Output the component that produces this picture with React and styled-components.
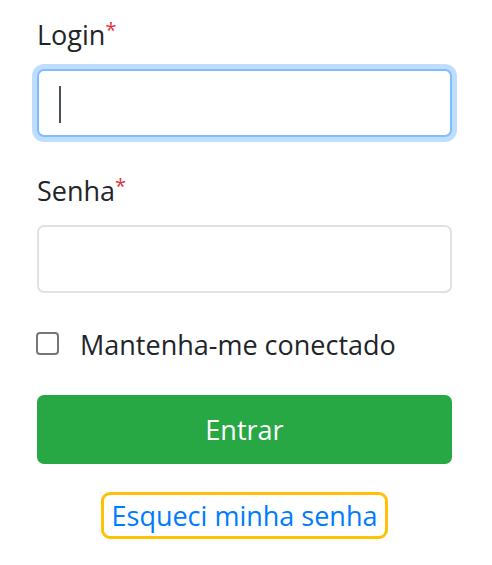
import React from "react";
import styled, { createGlobalStyle } from "styled-components";

const GlobalStyle = createGlobalStyle`
  html, body {
    margin: 0;
    padding: 0;
    background: #ffffff;
  }
  body {
    font-family: "Open Sans", "Noto Sans", sans-serif;
    color: #212529;
  }
`;

const Form = styled.form`
  width: 415px;
  padding: 15px 0 0 37px;
  display: flex;
  flex-direction: column;
`;

const Group = styled.div`
  display: flex;
  flex-direction: column;
  margin-bottom: ${(p) => p.$gap || 34}px;
`;

const Label = styled.label`
  font-size: 27px;
  line-height: 39px;
  margin-bottom: 15px;
  color: #212529;
`;

const Required = styled.span`
  color: #e0313f;
  font-size: 20px;
  vertical-align: 8px;
  line-height: 0;
`;

const InputWrap = styled.div`
  position: relative;
`;

const Input = styled.input`
  box-sizing: border-box;
  width: 100%;
  height: 68px;
  border-radius: 7px;
  border: 2px solid ${(p) => (p.$focused ? "#80bdff" : "#dee2e6")};
  box-shadow: ${(p) => (p.$focused ? "0 0 0 5px rgba(0, 123, 255, 0.25)" : "none")};
  padding: 0 20px;
  font-family: inherit;
  font-size: 27px;
  color: #495057;
  outline: none;
  background: #fff;
`;

const Caret = styled.span`
  position: absolute;
  left: 22px;
  top: 17px;
  width: 2px;
  height: 37px;
  background: #495057;
`;

const CheckRow = styled.label`
  display: flex;
  align-items: center;
  gap: 21px;
  font-size: 27px;
  line-height: 39px;
  margin-bottom: 31px;
`;

const Check = styled.input`
  appearance: none;
  box-sizing: border-box;
  margin: 0 0 3px -1px;
  width: 23px;
  height: 23px;
  border: 2px solid #767676;
  border-radius: 4px;
  background: #fff;
`;

const Submit = styled.button`
  height: 69px;
  border: none;
  border-radius: 7px;
  background: #28a745;
  color: #ffffff;
  font-family: inherit;
  font-size: 27px;
  cursor: pointer;
  margin-bottom: 28px;
`;

const Footer = styled.div`
  display: flex;
  justify-content: center;
`;

const ForgotLink = styled.a`
  box-sizing: border-box;
  display: inline-block;
  height: 47px;
  line-height: 41px;
  padding: 0 8px;
  border: 3px solid #ffc107;
  border-radius: 9px;
  color: #007bff;
  font-size: 27px;
  text-decoration: none;
`;

export default function App() {
  return (
    <>
      <GlobalStyle />
      <Form onSubmit={(e) => e.preventDefault()}>
        <Group>
          <Label htmlFor="login">
            Login<Required>*</Required>
          </Label>
          <InputWrap>
            <Input id="login" type="text" $focused />
            <Caret />
          </InputWrap>
        </Group>
        <Group $gap={32}>
          <Label htmlFor="senha">
            Senha<Required>*</Required>
          </Label>
          <Input id="senha" type="password" />
        </Group>
        <CheckRow>
          <Check type="checkbox" />
          Mantenha-me conectado
        </CheckRow>
        <Submit type="submit">Entrar</Submit>
        <Footer>
          <ForgotLink href="#">Esqueci minha senha</ForgotLink>
        </Footer>
      </Form>
    </>
  );
}
